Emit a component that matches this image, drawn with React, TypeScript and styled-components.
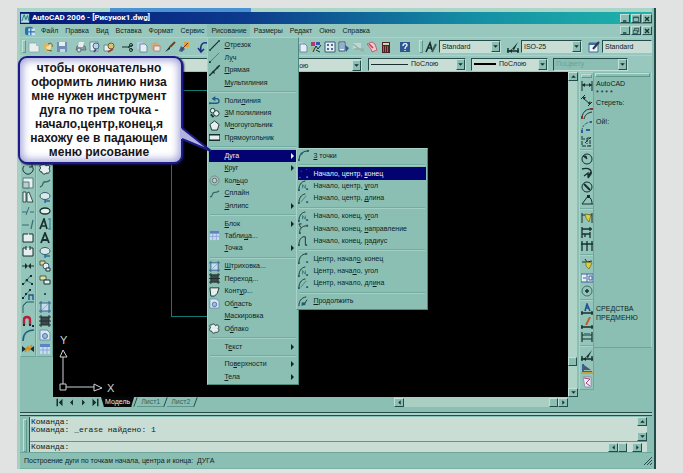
import React from "react";
import styled, { createGlobalStyle, css } from "styled-components";

const c = {
  page: "#e1e3e2",
  face: "#8cbfb4",
  bar: "#98c8bd",
  light: "#c2e0d7",
  track: "#a9cfc3",
  field: "#c9ddd5",
  shadow: "#5f978d",
  dark: "#234c4a",
  ink: "#0e2423",
  navy: "#020271",
};

const Global = createGlobalStyle`
  * { box-sizing: border-box; }
  body { margin: 0; background: ${c.page}; }
  button, select, input, textarea { font: inherit; color: inherit; margin: 0; padding: 0; border: 0; background: none; border-radius: 0; }
`;

const Page = styled.div`
  min-height: 100vh;
  display: flex;
  padding: 8px 27px 4px 17px;
  font-family: "Liberation Sans", Arial, sans-serif;
  font-size: 7px;
  line-height: 10px;
  color: ${c.ink};
`;
const Window = styled.main`
  position: relative;
  flex: 1;
  min-width: 0;
  display: flex;
  flex-direction: column;
  background: ${c.face};
  border-left: 3px solid ${c.track};
  border-right: 2px solid ${c.dark};
  padding-right: 2px;
`;
const TopEdge = styled.div`
  height: 4px;
  background: linear-gradient(90deg, #a9d6c8 90px, #4a93d2 90px, #4a93d2 231px, #a9d6c8 231px);
`;
const TitleBar = styled.header`
  height: 12px;
  display: flex;
  align-items: center;
  gap: 2px;
  background: linear-gradient(90deg, #07177a, #0c3a8c 35%, #148fa4 72%, #1fb3ab);
`;
const Title = styled.h1`
  flex: 1;
  margin: 0;
  color: #fff;
  font: bold 8px/12px Roboto, "Liberation Sans", sans-serif;
  white-space: nowrap;
`;
const Controls = styled.div`
  display: flex;
  gap: 1px;
  margin-left: auto;
`;
const raised = css`
  background: ${c.face};
  border: 1px solid;
  border-color: ${c.light} ${c.dark} ${c.dark} ${c.light};
`;
const Small = styled.button`
  && {
    ${raised}
  }
  width: 10px;
  height: 9px;
  flex: none;
  display: grid;
  place-items: center;
`;
const MenuBar = styled.nav`
  height: 13px;
  display: flex;
  align-items: center;
  padding-left: 3px;
  background: ${c.bar};
`;
const MenuHost = styled.div`
  position: relative;
`;
const MenuTop = styled.button<{ $open?: boolean }>`
  display: block;
  height: 13px;
  white-space: nowrap;
  && {
    padding: 0 3px 0 4px;
    background: ${(p) => (p.$open ? "#8bbdb2" : "transparent")};
  }
`;
const Menu = styled.div<{ $sub?: boolean }>`
  position: absolute;
  z-index: ${(p) => (p.$sub ? 4 : 3)};
  left: ${(p) => (p.$sub ? "calc(100% - 1px)" : "0")};
  top: ${(p) => (p.$sub ? "-2px" : "100%")};
  width: ${(p) => (p.$sub ? 132 : 92)}px;
  height: ${(p) => (p.$sub ? 162 : 348)}px;
  display: flex;
  flex-direction: column;
  padding: 1px;
  background: #8bbfb3;
  border: 1px solid;
  border-color: #a6d2c7 #4f8a80 #4f8a80 #a6d2c7;
  color: ${c.ink};
`;
const ItemHost = styled.div`
  flex: 25 1 0;
  min-height: 0;
  position: relative;
  display: flex;
`;
const Item = styled.button<{ $active?: boolean }>`
  flex: 1;
  min-width: 0;
  display: grid;
  grid-template-columns: 15px 1fr 6px;
  align-items: center;
  text-align: left;
  white-space: nowrap;
  && {
    background: ${(p) => (p.$active ? c.navy : "transparent")};
    color: ${(p) => (p.$active ? "#e8f2f4" : "inherit")};
  }
`;
const Rule = styled.hr`
  flex: 11 1 0;
  margin: 0 1px;
  border: 0;
  background: linear-gradient(transparent 2px, #73aca1 2px, #73aca1 3px, #a3d0c5 3px, #a3d0c5 4px, transparent 4px);
`;
const Toolbar = styled.div<{ $tall?: boolean }>`
  height: ${(p) => (p.$tall ? 18 : 17)}px;
  display: flex;
  align-items: center;
  background: ${c.bar};
  border-top: 1px solid #a9d3c8;
`;
const Grip = styled.span<{ $flat?: boolean }>`
  flex: none;
  width: ${(p) => (p.$flat ? "auto" : "4px")};
  height: ${(p) => (p.$flat ? "4px" : "13px")};
  margin: ${(p) => (p.$flat ? "1px" : "0 1px 0 2px")};
  border: 1px solid;
  border-color: ${c.light} ${c.shadow} ${c.shadow} ${c.light};
`;
const Tool = styled.button`
  flex: none;
  width: 14px;
  height: 14px;
  display: grid;
  place-items: center;
`;
const Gap = styled.span`
  flex: none;
  width: 5px;
`;
const Field = styled.label<{ $w?: number; $left?: number; $off?: boolean }>`
  flex: ${(p) => (p.$w ? `0 0 ${p.$w}px` : "1 1 0")};
  min-width: 0;
  height: 13px;
  margin-left: ${(p) => p.$left ?? 0}px;
  display: grid;
  grid-template-columns: auto 1fr auto;
  align-items: center;
  border: 1px solid;
  border-color: ${c.dark} ${c.light} ${c.light} ${c.dark};
  background: ${(p) => (p.$off ? c.face : c.field)};
  color: ${(p) => (p.$off ? "#6ba399" : c.ink)};
`;
const FieldIcon = styled.span`
  display: flex;
`;
const Select = styled.select`
  appearance: none;
  min-width: 0;
  width: 100%;
  height: 11px;
  && { padding-left: 2px; }
  &:disabled { color: #6ba399; opacity: 1; }
`;
const DropMark = styled.span`
  ${raised}
  width: 9px;
  height: 11px;
  display: grid;
  place-items: center;
`;
const Work = styled.div`
  flex: 1;
  min-height: 0;
  display: flex;
`;
const SideBars = styled.div`
  display: flex;
  width: 33px;
  align-items: flex-start;
`;
const Column = styled.div<{ $h: number; $w: number }>`
  flex: none;
  width: ${(p) => p.$w}px;
  height: ${(p) => p.$h}px;
  display: flex;
  flex-direction: column;
  background: #94c5ba;
  border: 1px solid;
  border-color: #a9d3c8 #6fa69b #6fa69b #a9d3c8;
`;
const ColTool = styled.button`
  flex: 7 1 0;
  min-height: 0;
  display: grid;
  place-items: center;
`;
const ColGap = styled.span`
  flex: 2 1 0;
  background: linear-gradient(transparent 1px, #76aca2 1px, #76aca2 2px, #a9d3c8 2px, #a9d3c8 3px, transparent 3px);
`;
const Center = styled.div`
  flex: 1;
  min-width: 0;
  display: flex;
  flex-direction: column;
`;
const ViewRow = styled.div`
  flex: 1;
  display: flex;
`;
const Canvas = styled.section`
  flex: 1;
  min-width: 0;
  display: flex;
  flex-direction: column;
  justify-content: space-between;
  background: #000;
`;
const VBar = styled.div`
  width: 9px;
  display: flex;
  flex-direction: column;
  background: #b0d3c8;
`;
const Thumb = styled.span`
  ${raised}
  flex: none;
  width: 9px;
  height: 9px;
`;
const Fill = styled.span`
  flex: 1;
`;
const Foot = styled.span`
  height: 22px;
`;
const Tabs = styled.div`
  height: 12px;
  display: flex;
  align-items: flex-start;
  padding: 0 9px 0 0;
`;
const NavBtn = styled.button`
  width: 12px;
  height: 11px;
  display: grid;
  place-items: center;
`;
const Tab = styled.button<{ $on?: boolean }>`
  height: 10px;
  && {
    padding: 0 4px;
    color: ${(p) => (p.$on ? "#e6f0ee" : "#2f6660")};
    background: ${(p) => (p.$on ? "#050808" : "transparent")};
    border-bottom: 1px solid ${(p) => (p.$on ? "#050808" : c.shadow)};
  }
  clip-path: ${(p) => (p.$on ? "polygon(0 0, 100% 0, calc(100% - 3px) 100%, 3px 100%)" : "none")};
`;
const TabEdge = styled.span`
  width: 1px;
  height: 10px;
  margin: 0 1px;
  background: ${c.dark};
  transform: rotate(20deg);
`;
const HBar = styled.div<{ $w: number }>`
  margin-left: auto;
  width: ${(p) => p.$w}px;
  height: 10px;
  display: flex;
  align-items: center;
  background: ${c.track};
`;
const Right = styled.aside`
  width: 75px;
  display: flex;
  align-items: flex-start;
  padding-left: 2px;
`;
const ScreenMenu = styled.div`
  flex: 1;
  height: 276px;
  display: flex;
  flex-direction: column;
  border-right: 1px solid #a9d3c8;
  border-bottom: 1px solid #6fa69b;
`;
const ScreenLink = styled.a<{ $top?: number }>`
  margin: ${(p) => p.$top ?? 0}px 0 0 2px;
  line-height: 9px;
  color: ${c.ink};
  text-decoration: none;
  white-space: nowrap;
`;
const Dock = styled.section`
  margin-top: 3px;
  padding: 4px 5px 0 3px;
  display: flex;
  gap: 2px;
  border-top: 1px solid ${c.dark};
  background: linear-gradient(#a9d3c8 2px, ${c.dark} 2px, ${c.dark} 3px, transparent 3px);
`;
const DockGrip = styled.span`
  width: 4px;
  margin-top: 2px;
  border: 1px solid;
  border-color: ${c.light} ${c.shadow} ${c.shadow} ${c.light};
`;
const CommandBox = styled.div`
  flex: 1;
  min-width: 0;
  border-left: 1px solid ${c.dark};
  background: ${c.field};
  font-family: "Liberation Mono", monospace;
  font-size: 8px;
`;
const LogRow = styled.div`
  height: 24px;
  display: flex;
`;
const Log = styled.textarea`
  flex: 1;
  height: 24px;
  resize: none;
  overflow: hidden;
  outline: 0;
  && {
    line-height: 8px;
    padding: 1px 0 0 1px;
  }
`;
const ScrollCol = styled.div`
  width: 10px;
  display: flex;
  flex-direction: column;
  justify-content: space-between;
`;
const Prompt = styled.label`
  height: 11px;
  display: flex;
  align-items: center;
  padding-left: 1px;
  border-top: 1px solid ${c.shadow};
`;
const PromptInput = styled.input`
  flex: 1;
  min-width: 0;
  height: 9px;
  outline: 0;
`;
const Status = styled.footer`
  height: 17px;
  display: flex;
  align-items: center;
  justify-content: space-between;
  padding-left: 4px;
  border-top: 1px solid #6fa69b;
  border-bottom: 1px solid #74b3a4;
  white-space: pre;
`;
const Callout = styled.div`
  position: absolute;
  z-index: 6;
  left: -2px;
  top: 48px;
  width: 165px;
  height: 108px;
  padding: 3px 3px 0 0;
  text-align: center;
  white-space: pre-line;
  font: bold 12px/14px "Liberation Sans", sans-serif;
  color: #151517;
  background: #fff;
  border: 2px solid #1b1c86;
  border-radius: 9px;
  box-shadow: inset 0 0 8px 2px #9a9bd6, 1px 1px 2px #10104a;
`;
const Tail = styled.svg`
  position: absolute;
  left: 160px;
  top: 69px;
`;

const K = "#17302f";
const B = "#2b5f9c";
const W = "#e6efee";
const s = { fill: "none", stroke: K, strokeWidth: 1 } as const;

const art: Record<string, React.ReactNode> = {
  app: <><rect x="1" y="1" width="10" height="10" fill="#9fd4cf" /><path d="M2 10 5 2l2 6 2-5 2 7" fill="none" stroke="#176a7c" /><path d="M1 11h10" stroke="#fff" /></>,
  doc: <><rect x="0" y="1" width="10" height="10" rx="3" fill="#2a6fae" /><path d="M4 3h8v8H4z" fill="#cfe6ee" /><path d="M7 3v8M4 7h8" stroke="#2a6fae" strokeWidth="1.4" /></>,
  min: <path d="M3 9h5" stroke={K} strokeWidth="2" />,
  max: <path d="M2 3h8v7H2zM2 4h8" {...s} />,
  restore: <path d="M4 5V2h6v5H8M2 5h6v5H2z" {...s} />,
  close: <path d="M3 3l6 6M9 3l-6 6" stroke={K} strokeWidth="2" />,
  down: <path d="M2 4h8l-4 4z" fill={K} />,
  up: <path d="M2 8h8L6 4z" fill={K} />,
  left: <path d="M8 2v8L4 6z" fill={K} />,
  right: <path d="M4 2v8l4-4z" fill={K} />,
  first: <><path d="M10 1v10L5 6z" fill={K} /><path d="M3 1v10" stroke={K} strokeWidth="2" /></>,
  last: <><path d="M2 1v10l5-5z" fill={K} /><path d="M9 1v10" stroke={K} strokeWidth="2" /></>,
  new: <><path d="M1 2h7l3 3v6H1z" fill={W} stroke="#7d9fa5" strokeWidth=".7" /><path d="M8 2v3h3" fill="#a9bfd0" /></>,
  open: <><path d="M1 5l3-3 3 1 1 3-3 5z" fill="#e2b556" /><path d="M4 6l6-3-1 4-3 4z" fill="#f2e2a7" /><path d="M6 3c3-2 5 0 4 3M5 9l5 1" stroke="#7b5a28" fill="none" /></>,
  save: <><path d="M1 1h10v10H1z" fill="#6f8fb8" /><path d="M3 1h6v4H3z" fill={W} /><path d="M4 8h5v3H4z" fill="#c6d4e4" /></>,
  print: <><path d="M2 5h8l1 4H1z" fill="#8b9aa4" stroke="#4b5e68" strokeWidth=".7" /><path d="M4 1h5L8 6H3z" fill={W} /><circle cx="4" cy="9" r="2" fill="#d9dfe4" stroke="#5b6d78" /></>,
  preview: <><path d="M1 1h8v9H1z" fill={W} stroke="#6f8e9c" /><circle cx="7" cy="5" r="3" fill="#bcd4ea" stroke="#45688d" /><path d="M7 8l-2 3" stroke="#5a4b7a" strokeWidth="2" /></>,
  publish: <><path d="M1 4h7v6H1z" fill={W} stroke="#6c8893" /><circle cx="8" cy="5" r="3" fill="#d9c46f" stroke="#715f2f" /><path d="M5 11l5-3" stroke="#aa3c2c" strokeWidth="2" /></>,
  cut: <><path d="M0 6h6l5-2M6 6l5 3" {...s} /><circle cx="9" cy="4" r="1.5" {...s} /><circle cx="9" cy="9" r="1.5" {...s} /></>,
  copy: <><path d="M1 1h6v7H1z" fill="#b8cde0" /><path d="M4 3h5l2 2v6H4z" fill={W} stroke="#5478a4" strokeWidth=".8" /></>,
  paste: <><path d="M1 3l5-2 5 4-3 6-6-2z" fill="#cfa87e" /><path d="M4 5h6v5H4z" fill="#f0e8dd" stroke="#977" strokeWidth=".7" /></>,
  brush: <><path d="M11 1L6 6" stroke="#7a3c1f" strokeWidth="2" /><path d="M6 5L1 11l5-3z" fill={K} /></>,
  match: <><path d="M6 1h5v5H6z" fill="#e2a03c" /><path d="M3 5l4 3-3 3-3-1z" fill="#365d96" /><path d="M10 2L3 9" stroke="#6c3424" /></>,
  undo: <path d="M10 2C5 1 3 4 4 10M1 7l3 4 3-3" fill="none" stroke="#1c2f86" strokeWidth="1.6" />,
  redo: <path d="M2 2c5-1 7 2 6 8M5 8l3 3 3-4" fill="none" stroke="#1c2f86" strokeWidth="1.6" />,
  props: <><path d="M1 1h4v4H1z" fill="#b5386c" /><path d="M6 1h4v3H6z" fill="#2d59b5" /><path d="M1 6h3v3H1z" fill="#d2b13a" /><path d="M3 11l3-6 2 3 3-4M6 9l4 2" stroke={K} fill="none" /></>,
  grid: <><path d="M1 1h10v10H1z" fill={W} stroke="#3d5b77" /><path d="M3 3h2v2H3zM7 3h2v2H7zM3 7h2v2H3zM7 7h2v2H7z" fill="#44709d" /></>,
  palettes: <><path d="M1 1h6v9H1z" fill={W} stroke="#36577d" /><path d="M2 3h4M2 5h4M2 7h4" stroke="#3a75ac" /><path d="M7 4l4 3-3 4z" fill="#2c5a8f" /></>,
  sheet: <><path d="M1 2h8v6H1z" fill="#c4d8d3" /><path d="M1 3l9 7M2 8h9v3" stroke="#94b0a7" strokeWidth="1.5" fill="none" /></>,
  markup: <><path d="M1 3l5-2 3 2 2 6-5 2-1-3z" fill="#f0c7cb" stroke="#b34f60" strokeWidth=".8" /><path d="M3 3l4 4" stroke="#cc3850" strokeWidth="1.4" /></>,
  calc: <><path d="M2 1h8v11H2z" fill="#4f2228" /><path d="M3 2h6v2H3z" fill="#cdd9a4" /><path d="M3 6h6M3 8h6M3 10h6" stroke="#d5b5b0" strokeDasharray="1 1" /></>,
  help: <><path d="M1 1h10v10H1z" fill="#2e568f" /><path d="M4 5c0-3 4-3 4-1 0 2-2 1-2 4M6 9v1" fill="none" stroke="#e9f2fb" strokeWidth="1.4" /></>,
  styleA: <><path d="M1 11L5 2l2 7M3 7h4" fill="none" stroke={K} strokeWidth="1.6" /><path d="M11 3L7 11" stroke="#3b5a58" strokeWidth="2" /></>,
  styleDim: <><path d="M0 10h12M1 7v5M11 7v5" stroke={K} strokeWidth="1.4" /><path d="M2 10l3-2v4zM11 1L5 8l2 1z" fill={K} /></>,
  styleTab: <><path d="M1 2h9v9H1z" fill="#eef4f8" stroke="#3f6aa5" /><path d="M1 2h9v2H1z" fill="#3f6aa5" /><path d="M11 1L5 8" stroke="#2e3445" strokeWidth="2" /></>,
  layer: <path d="M1 7l5-3 5 3-5 3zM1 5l5-3 5 3-5 3z" fill={W} stroke={B} strokeWidth=".7" />,
  swatch: <rect x="2" y="2" width="8" height="8" fill="#fff" stroke={K} />,
  line: <><path d="M1 11L11 1" stroke={K} strokeWidth="1.3" /><path d="M0 10h2v2H0zM10 0h2v2h-2z" fill="#2a5763" /></>,
  ray: <><path d="M1 11L11 1" stroke="#547b78" /><path d="M0 10h2v2H0z" fill={K} /></>,
  xline: <><path d="M0 12L12 0" stroke={K} strokeWidth="1.6" /><path d="M3 7h3v3z M8 2h2v3z" fill={K} /></>,
  pline: <path d="M0 9h8c4 0 4-5 0-5H5m2-2L4 4l3 2M1 8v2" fill="none" stroke="#225b8b" strokeWidth="1.4" />,
  p3d: <><circle cx="4" cy="4" r="2.5" fill={W} stroke={K} /><circle cx="8" cy="7" r="3" fill={W} stroke={K} /><path d="M2 8l3 3" stroke={K} strokeWidth="2" /></>,
  polygon: <path d="M6 1l5 4-2 6H3L1 5z" fill={W} stroke={K} />,
  rect: <path d="M0 3h12v6H0z" fill={W} stroke={K} strokeWidth="1.4" />,
  arc: <><path d="M1 11C1 5 5 1 11 1" fill="none" stroke="#1f5762" strokeWidth="1.2" /><path d="M0 10h2v2H0zM10 0h2v2h-2zM3 3h2v2H3z" fill="#1f5762" /></>,
  arcDots: <path d="M1 10h2v1H1zM3 3h1v1H3zM9 1h1v1H9zM9 9h2v2H9z" fill="#5676b8" />,
  arcC: <><path d="M1 11C1 5 4 1 9 1" {...s} /><path d="M0 10h2v2H0zM8 0h2v2H8zM9 9h2v2H9z" fill="#205a6c" /></>,
  arcA: <><path d="M1 11C1 6 3 2 8 1" {...s} /><path d="M5 9V5l3 4V5" fill="none" stroke="#337a80" /><path d="M0 10h2v2H0zM9 9h2v2H9z" fill="#205a6c" /></>,
  arcL: <><path d="M1 11C1 6 3 2 8 1" {...s} /><path d="M3 10l6-7" stroke="#3c8186" /><path d="M0 10h2v2H0zM9 9h2v2H9z" fill="#205a6c" /></>,
  arcD: <><path d="M2 11C1 7 4 3 10 3M3 5L1 1M1 1h3" {...s} /><path d="M1 10h2v2H1zM9 2h2v2H9z" fill="#205a6c" /></>,
  arcR: <><path d="M1 11C1 5 4 1 8 2M8 2v9" {...s} /><path d="M0 10h2v2H0zM8 10h2v2H8z" fill="#205a6c" /></>,
  arcCont: <><path d="M1 11C1 6 3 2 9 1M4 10c4 0 4-4 6-6" {...s} /><path d="M4 7h4v3H4z" fill="#205a6c" /></>,
  donut: <><circle cx="6" cy="6" r="5" fill="#a6bdbb" stroke="#6c8a8a" /><circle cx="6" cy="6" r="2.5" fill="#b7cdca" stroke="#56706f" /></>,
  spline: <path d="M1 10c4-1 2-4 4-5s3 1 6-2" fill="none" stroke="#3b6a6a" strokeWidth="1.4" />,
  table: <><path d="M1 1h10v10H1z" fill="#c9daf0" /><path d="M1 1h10v3H1z" fill="#5d83c4" /><path d="M1 7h10M4 4v7M8 4v7" stroke="#7e9fd2" strokeWidth=".8" /></>,
  hatch: <><path d="M2 2h8v8H2z" fill="#c5dcec" /><path d="M0 2h12M0 10h12M2 0v12M10 0v12" stroke="#35608e" /><path d="M3 9l6-6" stroke="#8fb1cf" /></>,
  grad: <><path d="M2 2h8v8H2z" fill="#3c4a4e" /><path d="M0 2h12M0 10h12M2 0v12M10 0v12M0 6h12" stroke="#212c30" /></>,
  bound: <path d="M1 2h10L9 8l-3 3H2z" fill={W} stroke={K} />,
  region: <><path d="M1 1h7l3 3v7H1z" fill="#dbe7f0" stroke="#6d90b4" /><circle cx="6" cy="7" r="2.5" fill="#9fbad6" stroke="#4c77a5" /></>,
  cloud: <path d="M3 2c2-2 4 0 4 1 2-2 5 0 3 3 2 2 0 5-3 4-1 2-4 1-4-1-3 0-3-3-1-4-2-1-1-4 1-3z" fill={W} stroke={K} />,
  rotate: <path d="M2 3a5 5 0 1 0 8 0M10 1v3H7" {...s} />,
  scale: <><path d="M1 1h10v10H1z" fill={W} stroke="#587a7d" /><path d="M1 5h6v6H1z" fill="#b8cfd0" stroke="#587a7d" /></>,
  stretch: <path d="M1 1h3v10H1zM5 2l2-1 4 10H5z" fill={W} stroke={K} strokeWidth=".8" />,
  trim: <path d="M0 7h5M8 7h4M4 10l3-8" fill="none" stroke="#336d77" />,
  extend: <path d="M0 7h7M9 11l2-9" fill="none" stroke="#336d77" strokeWidth="1.2" />,
  breakPt: <path d="M1 2h5M7 2h4v8H1V2" fill={W} stroke={K} />,
  breakIt: <path d="M4 2H1v8h10V2H8M4 0v4M8 0v4" fill={W} stroke={K} />,
  join: <><path d="M0 6h5M7 6h5" stroke={K} /><path d="M3 3l3 3-3 3zM9 3L6 6l3 3z" fill={K} /></>,
  pts: <><path d="M1 11L9 1M3 6l8 4" stroke="#3a7480" /><path d="M0 9h2v2H0zM4 5h2v2H4zM8 1h2v2H8zM9 9h2v2H9z" fill={K} /></>,
  ptsN: <><path d="M1 10L8 2" stroke="#3a7480" /><path d="M0 9h2v2H0zM3 5h2v2H3zM7 1h2v2H7z" fill={K} /><path d="M7 12V7h4v5" fill="none" stroke="#1f5a8a" strokeWidth="1.4" /></>,
  chamfer: <path d="M1 12V5l4-4h7M1 5c1-2 2-3 4-4" fill="none" stroke="#275f68" />,
  fillet: <path d="M1 12C1 5 5 1 12 1" fill="none" stroke="#1f6088" strokeWidth="1.6" />,
  magnet: <><path d="M2 10V5c0-4 6-4 6 0v5" fill="none" stroke="#b51f3c" strokeWidth="2.4" /><path d="M1 10h2M7 10h2M10 11h2" stroke={K} strokeWidth="2" /></>,
  explode: <><path d="M0 3l4 3-4 3zM12 3L8 6l4 3z" fill={K} /><path d="M3 9l3-5 1 3 3-5" stroke="#d08d24" strokeWidth="1.6" fill="none" /></>,
  revEll: <><ellipse cx="6" cy="5" rx="5" ry="3.5" fill="#dbe8ea" stroke="#325e68" /><path d="M6 10h5M6 8v4" stroke="#2b6c96" strokeWidth="1.4" /></>,
  ellipse: <ellipse cx="6" cy="6" rx="5" ry="3" fill={W} stroke={K} strokeWidth="1.3" />,
  textA: <><path d="M1 11L5 1l3 10M2 8h5" fill="none" stroke={K} strokeWidth="1.7" /><path d="M11 1v10M9 1h3M9 11h3" stroke="#34759a" /></>,
  textB: <path d="M2 11L6 1l4 10M3 8h6" fill="none" stroke={K} strokeWidth="1.8" />,
  insert: <><path d="M1 1h5v4H1z" fill="#e6d58a" stroke={K} strokeWidth=".7" /><circle cx="7" cy="6" r="3" fill={W} stroke="#335d86" /><path d="M7 8h4v3H7z" fill="#eef2e8" stroke={K} /></>,
  block: <><path d="M1 2h6v4H1z" fill="#ece0a0" stroke={K} strokeWidth=".7" /><path d="M5 6h6v4H5z" fill={W} stroke={K} /></>,
  point: <rect x="5" y="5" width="2" height="2" fill="#205a6c" />,
  dimLin: <><path d="M1 1v10M11 1v10M1 5h10" stroke={K} /><path d="M1 5l3-2v4zM11 5L8 3v4z" fill={K} /></>,
  dimAl: <><path d="M2 4l7 6M0 5l4-4M7 12l4-4" stroke={K} /><path d="M2 3l3 0-2 3zM10 10l-3 0 2-3z" fill={K} /></>,
  dimArc: <><path d="M1 9C2 4 5 1 10 1M3 11c1-4 3-6 8-7" {...s} /><path d="M0 8h2v3H0zM9 0h3v2H9z" fill="#8c3538" /></>,
  dimOrd: <><path d="M1 10C1 5 4 2 9 1" fill="none" stroke="#2e6470" strokeDasharray="3 1" /><path d="M0 9h2v3H0zM9 0h2v2H9zM5 8h4v2H5z" fill="#2a5f99" /></>,
  dimJog: <path d="M1 1v10h10M3 3v2M6 3v6M6 3h5M4 8l6-6M9 5v6" {...s} strokeDasharray="4 1" />,
  dimRad: <><circle cx="6" cy="6" r="5" {...s} /><path d="M6 6L2 3l3 0z" fill={K} stroke={K} /></>,
  dimJr: <path d="M1 2c8-2 10 2 9 5L7 11M3 9l4-3v3l3-4" {...s} strokeWidth={1.3} />,
  dimDia: <><circle cx="6" cy="6" r="5" {...s} /><path d="M3 3l6 6" stroke={K} strokeWidth="2" /></>,
  dimAng: <><path d="M1 10h11M1 10L7 2M7 2c3 2 4 4 4 8" {...s} /><path d="M6 1h3v3H6z" fill={K} /></>,
  quick: <><path d="M1 1v10M11 1v10M1 3h10" stroke={K} /><path d="M4 2l6 1-2 7-3-4z" fill="#e0cf38" stroke="#6b6320" strokeWidth=".7" /></>,
  dimBase: <path d="M1 1v11M9 1v4M1 3h10M1 8h8M9 6v6M4 8v3" {...s} strokeWidth={1.3} />,
  dimCont: <path d="M1 1v10M6 1v10M11 1v10M0 4h12" {...s} strokeWidth={1.3} />,
  leader: <><path d="M1 4h5L4 1M6 4l5-1" {...s} /><path d="M5 4l6 1-3 6-3-3z" fill="#e0cf38" stroke="#6b6320" strokeWidth=".7" /></>,
  tol: <><path d="M0 2h12v8H0z" fill={W} stroke="#3d62a4" /><path d="M2 6h3M6 2v8M8 4h3v4H8z" fill="none" stroke="#3d62a4" /></>,
  center: <><circle cx="6" cy="6" r="5" fill="none" stroke="#466d6c" /><path d="M4 6h4M6 4v4" stroke={K} strokeWidth="1.5" /></>,
  dimEdit: <><path d="M0 10h12M1 8v4M11 8v4" stroke={K} strokeWidth="1.3" /><path d="M4 8l2-7 3 7M5 5h3" fill="none" stroke="#245492" strokeWidth="1.6" /></>,
  dimTxt: <><path d="M0 10h12M1 8v4M11 8v4" stroke={K} strokeWidth="1.3" /><path d="M9 0L5 8" stroke="#bb6230" strokeWidth="2" /></>,
  dimUpd: <><path d="M1 1v10M11 1v10M1 8h10M1 4h10" stroke={K} strokeWidth="1.2" /><path d="M3 2h6v3H3z" fill="#4f837f" /></>,
  dist: <><path d="M1 2h2v7h8v2H1z" fill="#2f63a8" /><path d="M3 3l7 5H3z" fill="#4a5a6c" /><path d="M0 11h12" stroke="#caa03e" strokeWidth="2" /></>,
  list: <><path d="M2 1h8v10H4z" fill={W} stroke="#7f77a4" strokeWidth=".7" /><path d="M3 2l6 1-4 4 4 3" fill="none" stroke="#9b4778" /></>,
};

const Glyph = ({ n, z = 12 }: { n: string; z?: number }) => (
  <svg width={z} height={z} viewBox="0 0 12 12" aria-hidden="true">{art[n]}</svg>
);

type Entry = { t: string; i?: string; sub?: boolean; active?: boolean } | null;

const drawMenu: Entry[] = [
  { t: "&Отрезок", i: "line" }, { t: "Л&уч", i: "ray" }, { t: "&Прямая", i: "xline" }, { t: "&Мультилиния" }, null,
  { t: "Поли&линия", i: "pline" }, { t: "&3М полилиния", i: "p3d" }, { t: "М&ногоугольник", i: "polygon" }, { t: "П&рямоугольник", i: "rect" }, null,
  { t: "&Дуга", sub: true, active: true }, { t: "&Круг", sub: true }, { t: "Кол&ьцо", i: "donut" }, { t: "&Сплайн", i: "spline" }, { t: "&Эллипс", sub: true }, null,
  { t: "&Блок", sub: true }, { t: "Табли&ца...", i: "table" }, { t: "&Точка", sub: true }, null,
  { t: "&Штриховка...", i: "hatch" }, { t: "Перехо&д...", i: "grad" }, { t: "Конт&ур...", i: "bound" }, { t: "Об&ласть", i: "region" }, { t: "&Маскировка" }, { t: "О&блако", i: "cloud" }, null,
  { t: "Т&екст", sub: true }, null,
  { t: "По&верхности", sub: true }, { t: "&Тела", sub: true },
];
const arcMenu: Entry[] = [
  { t: "&3 точки", i: "arc" }, null,
  { t: "Начало, центр, &конец", i: "arcDots", active: true }, { t: "Начало, центр, &угол", i: "arcA" }, { t: "Начало, центр, &длина", i: "arcL" }, null,
  { t: "Начало, конец, у&гол", i: "arcA" }, { t: "Начало, конец, &направление", i: "arcD" }, { t: "Начало, конец, &радиус", i: "arcR" }, null,
  { t: "Центр, начал&о, конец", i: "arcC" }, { t: "Центр, нача&ло, угол", i: "arcA" }, { t: "Центр, начало, дл&ина", i: "arcL" }, null,
  { t: "&Продолжить", i: "arcCont" },
];

const Label = ({ t }: { t: string }) => {
  const k = t.indexOf("&");
  return <span>{t.slice(0, k)}<u>{t[k + 1]}</u>{t.slice(k + 2)}</span>;
};

const MenuList = ({ items, nested, label }: { items: Entry[]; nested?: boolean; label: string }) => (
  <Menu role="menu" aria-label={label} $sub={nested}>
    {items.map((e, k) =>
      e === null ? <Rule key={k} /> : (
        <ItemHost key={k}>
          <Item role="menuitem" $active={e.active}>
            <FieldIcon>{e.i && <Glyph n={e.i} z={11} />}</FieldIcon>
            <Label t={e.t} />
            {e.sub && <svg width="4" height="6" viewBox="0 0 4 6"><path d="M0 0v6l3-3z" fill="currentColor" /></svg>}
          </Item>
          {e.sub && e.active && <MenuList items={arcMenu} nested label="Дуга" />}
        </ItemHost>
      ),
    )}
  </Menu>
);

type ComboProps = { label: string; value: string; w?: number; left?: number; off?: boolean; plain?: boolean; children?: React.ReactNode };

const Combo = ({ label, value, w, left, off, plain, children }: ComboProps) => (
  <Field $w={w} $left={left} $off={off}>
    <FieldIcon>{children}</FieldIcon>
    <Select aria-label={label} disabled={off}><option>{value}</option></Select>
    {!plain && <DropMark><Glyph n="down" z={7} /></DropMark>}
  </Field>
);

const Tools = ({ names }: { names: string }) => (
  <>{names.split(" ").map((n, k) => (n === "|" ? <Gap key={k} /> : <Tool key={k} aria-label={n}><Glyph n={n} /></Tool>))}</>
);
const ColTools = ({ names }: { names: string }) => (
  <>{names.split(" ").map((n, k) => (n === "|" ? <ColGap key={k} /> : <ColTool key={k} aria-label={n}><Glyph n={n} /></ColTool>))}</>
);

const WindowButtons = ({ mid }: { mid: string }) => (
  <Controls>
    {["min", mid, "close"].map((n) => <Small key={n} aria-label={n}><Glyph n={n} z={8} /></Small>)}
  </Controls>
);

const menus = ["Файл", "Правка", "Вид", "Вставка", "Формат", "Сервис", "Рисование", "Размеры", "Редакт", "Окно", "Справка"];

export default function App() {
  return (
    <>
      <Global />
      <Page>
        <Window>
          <TopEdge />
          <TitleBar>
            <Glyph n="app" z={10} />
            <Title>AutoCAD 2006 - [Рисунок1.dwg]</Title>
            <WindowButtons mid="max" />
          </TitleBar>
          <MenuBar>
            <Tool aria-label="document"><Glyph n="doc" z={10} /></Tool>
            {menus.map((m) => (
              <MenuHost key={m}>
                <MenuTop $open={m === "Рисование"}>{m}</MenuTop>
                {m === "Рисование" && <MenuList items={drawMenu} label={m} />}
              </MenuHost>
            ))}
            <WindowButtons mid="restore" />
          </MenuBar>
          <Toolbar $tall>
            <Grip />
            <Tools names="new open save | print preview publish | cut copy paste brush match | undo redo | print preview publish sheet | | copy props grid palettes sheet markup calc | help" />
            <Gap />
            <Grip />
            <Tools names="styleA" />
            <Combo label="Текстовый стиль" value="Standard" w={62} left={1} />
            <Gap />
            <Tools names="styleDim" />
            <Combo label="Размерный стиль" value="ISO-25" w={61} left={1} />
            <Gap />
            <Tools names="styleTab" />
            <Combo label="Стиль таблиц" value="Standard" left={1} plain />
          </Toolbar>
          <Toolbar>
            <Grip />
            <Tools names="layer" />
            <Combo label="Слой" value="0" w={200} left={1} />
            <Tools names="layer" />
            <Combo label="Цвет" value="ПоСлою" w={98} left={8}><Glyph n="swatch" z={14} /></Combo>
            <Combo label="Тип линий" value="ПоСлою" w={98} left={6}>
              <svg width="40" height="4"><path d="M2 2h37v1H2z" fill={K} /></svg>
            </Combo>
            <Combo label="Вес линий" value="ПоСлою" w={77} left={5}>
              <svg width="25" height="4"><path d="M2 1h22v2H2z" fill="#000" /></svg>
            </Combo>
            <Combo label="Стиль печати" value="ПоЦвету" w={75} left={5} off />
          </Toolbar>
          <Work>
            <SideBars>
              <Column $w={16} $h={285}>
                <Grip $flat />
                <ColTools names="new copy stretch trim extend paste rotate scale stretch trim extend breakPt breakIt join pts ptsN chamfer magnet fillet explode" />
              </Column>
              <Column $w={17} $h={285}>
                <Grip $flat />
                <ColTools names="line xline pline polygon rect arc cloud spline revEll ellipse textA textB revEll insert block point hatch grad region table" />
              </Column>
            </SideBars>
            <Center>
              <ViewRow>
                <Canvas aria-label="Чертёж">
                  <svg width="200" height="250" shapeRendering="crispEdges"><path d="M200 18H118V244H200" fill="none" stroke="#137a76" /></svg>
                  <svg width="80" height="66" stroke="#cfd4d4" fill="none">
                    <path d="M7 53h6v6H7zM10 53V26M7 26l3-7 4 7zM13 56h28M41 53v7l8-3z" />
                    <text x="7" y="13" fontSize="11" fill="#cfd4d4" stroke="none">Y</text>
                    <text x="54" y="61" fontSize="11" fill="#cfd4d4" stroke="none">X</text>
                  </svg>
                </Canvas>
                <VBar>
                  <Small aria-label="up"><Glyph n="up" z={7} /></Small>
                  <Fill />
                  <Thumb />
                  <Foot />
                  <Small aria-label="down"><Glyph n="down" z={7} /></Small>
                </VBar>
              </ViewRow>
              <Tabs>
                {["first", "left", "right", "last"].map((n) => <NavBtn key={n} aria-label={n}><Glyph n={n} z={9} /></NavBtn>)}
                <Tab $on>Модель</Tab>
                <TabEdge />
                <Tab>Лист1</Tab>
                <TabEdge />
                <Tab>Лист2</Tab>
                <TabEdge />
                <HBar $w={174}>
                  <Small aria-label="left"><Glyph n="left" z={7} /></Small>
                  <Fill />
                  <Thumb />
                  <Small aria-label="right"><Glyph n="right" z={7} /></Small>
                </HBar>
              </Tabs>
            </Center>
            <Right>
              <Column $w={15} $h={318}>
                <Grip $flat />
                <ColTools names="dimLin dimAl dimArc dimOrd dimJog | dimRad dimJr dimDia dimAng | quick dimBase dimCont | leader tol center | dimEdit dimTxt dimUpd | styleDim dist list" />
              </Column>
              <ScreenMenu>
                <Grip $flat />
                <ScreenLink href="#root" $top={1}>AutoCAD</ScreenLink>
                <ScreenLink href="#stars">* * * *</ScreenLink>
                <ScreenLink href="#erase" $top={1}>Стереть:</ScreenLink>
                <ScreenLink href="#oops" $top={10}>Ой!:</ScreenLink>
                <ScreenLink href="#tools" $top={178}>СРЕДСТВА</ScreenLink>
                <ScreenLink href="#prev">ПРЕДМЕНЮ</ScreenLink>
              </ScreenMenu>
            </Right>
          </Work>
          <Dock>
            <DockGrip />
            <CommandBox>
              <LogRow>
                <Log readOnly aria-label="Журнал команд" defaultValue={"Команда:\nКоманда: _erase найдено: 1"} />
                <ScrollCol>
                  <Small aria-label="up"><Glyph n="up" z={7} /></Small>
                  <Small aria-label="down"><Glyph n="down" z={7} /></Small>
                </ScrollCol>
              </LogRow>
              <Prompt>
                Команда:
                <PromptInput />
                <Small type="button" aria-label="left"><Glyph n="left" z={7} /></Small>
                <Thumb />
                <Gap />
                <Small type="button" aria-label="right"><Glyph n="right" z={7} /></Small>
                <Gap />
              </Prompt>
            </CommandBox>
          </Dock>
          <Status>
            <span>Построение дуги по точкам начала, центра и конца:  ДУГА</span>
            <svg width="9" height="9"><path d="M1 9l8-8M4 9l5-5M7 9l2-2" stroke={c.dark} /></svg>
          </Status>
          <Callout>
            {"чтобы окончательно\nоформить линию низа\nмне нужен инструмент\nдуга по трем точка -\nначало,центр,конец,я\nнахожу ее в падающем\nменю рисование"}
            <Tail width="34" height="26" viewBox="0 0 34 26">
              <path d="M0 1h2L31 24 2 12H0z" fill="#b3b3de" />
              <path d="M2 1L31 24 2 12" fill="none" stroke="#1b1c86" strokeWidth="2" />
            </Tail>
          </Callout>
        </Window>
      </Page>
    </>
  );
}
